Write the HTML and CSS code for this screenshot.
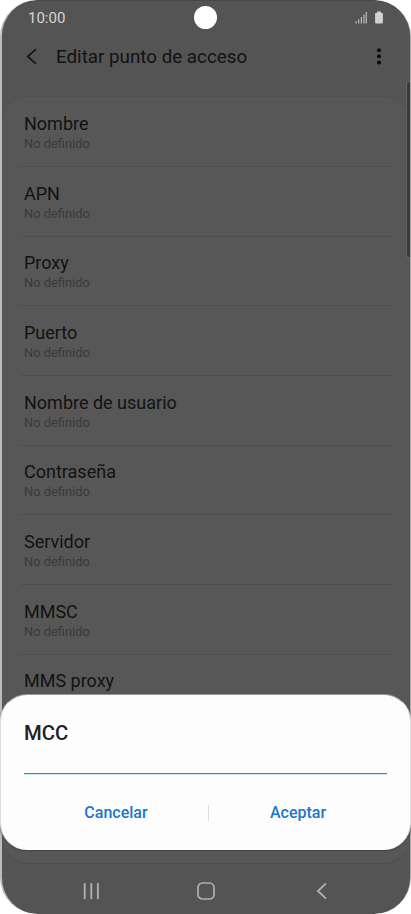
FILE: index.html
```html
<!DOCTYPE html>
<html lang="es">
<head>
<meta charset="utf-8">
<title>Editar punto de acceso</title>
<link rel="stylesheet" href="styles.css">
</head>
<body>
<div class="phone">
  <div class="screen">
    <header class="status">
      <span class="time">10:00</span>
      <span class="camera"></span>
      <svg class="status-icons" width="30" height="14" viewBox="0 0 30 14">
        <path d="M1.100 10v2.500M3.700 8.200v4.300M6.400 6v6.500M9 3.500v9M11.300 1v11.500" fill="none" stroke="#bdbdbd" stroke-width="1.200"/>
        <path d="M20.500 2h1.500V.6h4V2h1.500q.4 0 .4.500V11.800q0 .8-.8.800h-6.200q-.8 0-.8-.8V2.500q0-.5.4-.5z" fill="#d2d2d2"/>
      </svg>
    </header>
    <div class="toolbar">
      <svg class="back" width="12" height="18" viewBox="0 0 12 18"><path d="M10 1.200 1.800 8.500l8.200 7.300" fill="none" stroke="#151515" stroke-width="1.700"/></svg>
      <h1>Editar punto de acceso</h1>
      <svg class="more" width="6" height="18" viewBox="0 0 6 18" fill="#0c0c0c"><circle cx="3" cy="2.200" r="2"/><circle cx="3" cy="8.300" r="2"/><circle cx="3" cy="14.400" r="2"/></svg>
    </div>
    <main class="list">
      <div class="row"><b>Nombre</b><small>No definido</small></div>
      <div class="row"><b>APN</b><small>No definido</small></div>
      <div class="row"><b>Proxy</b><small>No definido</small></div>
      <div class="row"><b>Puerto</b><small>No definido</small></div>
      <div class="row"><b>Nombre de usuario</b><small>No definido</small></div>
      <div class="row"><b>Contraseña</b><small>No definido</small></div>
      <div class="row"><b>Servidor</b><small>No definido</small></div>
      <div class="row"><b>MMSC</b><small>No definido</small></div>
      <div class="row"><b>MMS proxy</b></div>
    </main>
    <nav class="navbar">
      <svg width="18" height="18" viewBox="0 0 18 18"><path d="M2.700 1v16M9.300 1v16M15.900 1v16" fill="none" stroke="#acacac" stroke-width="1.900"/></svg>
      <svg width="18" height="18" viewBox="0 0 18 18"><rect x="1" y="1" width="16" height="16" rx="4.500" fill="none" stroke="#b0b0b0" stroke-width="1.700"/></svg>
      <svg width="18" height="18" viewBox="0 0 18 18"><path d="M14 1.400 6 9l8 7.600" fill="none" stroke="#b0b0b0" stroke-width="1.900"/></svg>
    </nav>
  </div>
  <div class="scrollbar"></div>
  <section class="dialog">
    <h2>MCC</h2>
    <div class="field"></div>
    <div class="actions"><button class="cancel">Cancelar</button><span class="separator"></span><button class="accept">Aceptar</button></div>
  </section>
</div>
</body>
</html>
```
FILE: styles.css
```css
* { box-sizing: border-box; }
body { margin: 0; background: #fff; font-family: Roboto, sans-serif; }
.phone {
  position: relative;
  width: 411px;
  height: 914px;
  padding: 0 1px 0 2px;
  overflow: hidden;
  border-radius: 37px;
  background: linear-gradient(90deg, #bcbcbc 0, #a0a0a0 50%, #a8a8a8 100%);
}
.screen {
  display: flex;
  flex-direction: column;
  height: 914px;
  overflow: hidden;
  border-radius: 36px;
  border-top: 1px solid #484848;
  background: #545454;
}
.status {
  display: grid;
  grid-template-columns: 1fr 23px 1fr;
  align-items: center;
  height: 33px;
  padding: 0 25px 0 26px;
}
.time { padding-top: 1px; font-size: 15px; color: #d4d4d4; }
.camera { width: 23px; height: 23px; margin-left: -1px; border-radius: 50%; background: #fff; }
.status-icons { justify-self: end; }
.toolbar {
  display: flex;
  align-items: center;
  height: 45px;
  margin-bottom: 17px;
  padding: 0 28px 0 24px;
}
h1 { flex: 1; margin: 0 0 0 18px; padding-top: 1px; font-size: 18.800px; font-weight: 400; line-height: 24px; color: #121212; }
.list {
  flex: none;
  height: 768px;
  border-top: 1px solid #515151;
  border-bottom: 1px solid #4e4e4e;
  border-radius: 26px;
  background: #575757;
}
.row {
  display: flex;
  flex-direction: column;
  height: 69.700px;
  margin: 0 19px 0 18px;
  padding: 15.600px 4px 0;
  border-bottom: 1px solid #4f4f4f;
}
.row:first-child { height: 70px; padding-top: 16px; }
.row:last-child { border-bottom: 0; }
b { font-size: 18px; font-weight: 400; line-height: 22px; color: #121212; }
small { font-size: 12.900px; line-height: 18px; color: #3a3a3a; }
.navbar {
  display: grid;
  grid-template-columns: repeat(3, 115px);
  justify-content: center;
  justify-items: center;
  align-items: center;
  flex: 1;
  padding-top: 3px;
}
.scrollbar {
  position: absolute;
  top: 81px;
  right: 1px;
  width: 4px;
  height: 177px;
  border: 1px solid #666;
  border-right: 0;
  border-radius: 3px 0 0 3px;
  background: #383838;
}
.dialog {
  position: absolute;
  top: 694px;
  left: 0;
  width: 411px;
  height: 156px;
  padding: 26px 24px 0 23px;
  border: 1px solid #ddd;
  border-top-color: #999;
  border-bottom: 0;
  border-radius: 27px;
  background: #fdfdfd;
  box-shadow: 0 1px 2px #444;
}
h2 { margin: 0; font-size: 20.300px; font-weight: 500; line-height: 24px; color: #222; }
.field { width: 363px; height: 29px; border-bottom: 1.500px solid #2b8fc4; box-shadow: 0 1px 0 #c8e8f5; }
.actions { display: grid; grid-template-columns: 184px 1px 178px; align-items: center; height: 77px; }
.separator { height: 16px; background: #ddd; }
button { padding: 0; border: 0; background: none; font: 500 16px/20px Roboto, sans-serif; color: #1976ce; }
```
